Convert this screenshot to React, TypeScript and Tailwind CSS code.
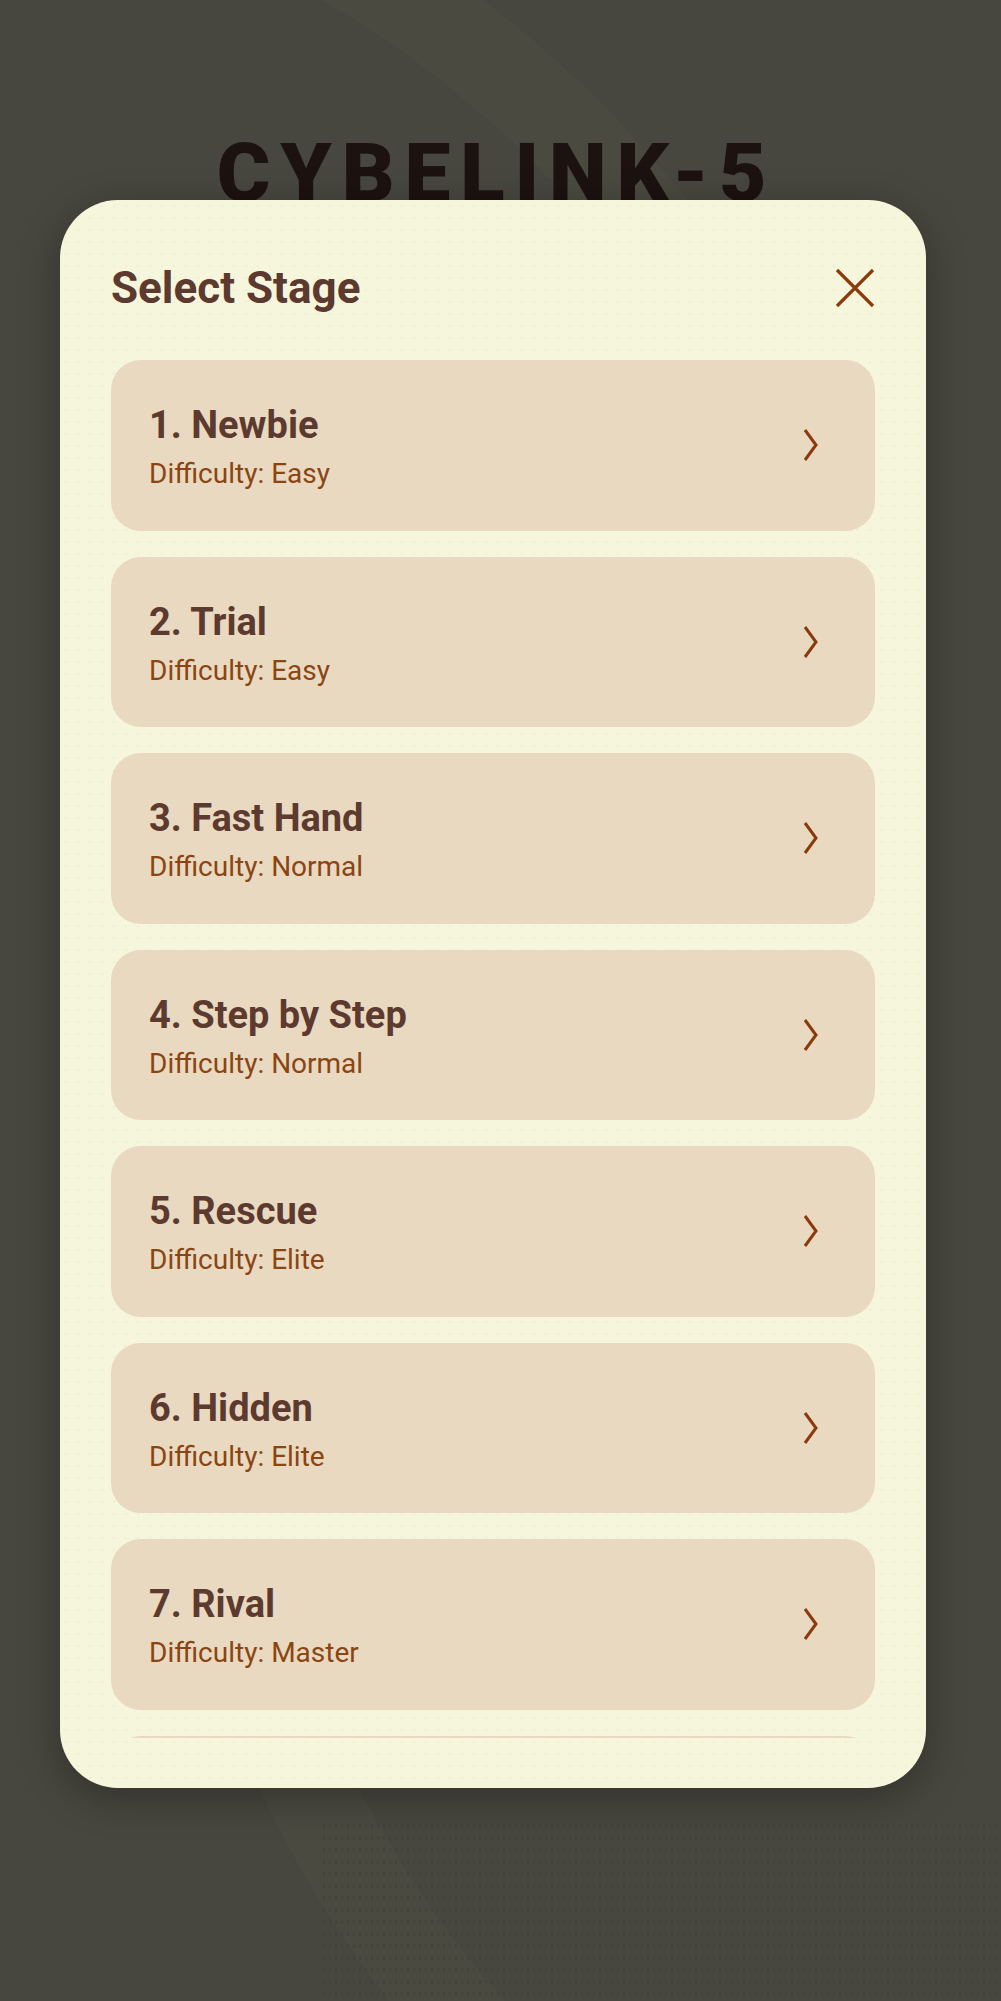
import React from "react";

type Stage = {
  name: string;
  difficulty: string;
};

const stages: Stage[] = [
  { name: "1. Newbie", difficulty: "Easy" },
  { name: "2. Trial", difficulty: "Easy" },
  { name: "3. Fast Hand", difficulty: "Normal" },
  { name: "4. Step by Step", difficulty: "Normal" },
  { name: "5. Rescue", difficulty: "Elite" },
  { name: "6. Hidden", difficulty: "Elite" },
  { name: "7. Rival", difficulty: "Master" },
];

const Chevron: React.FC = () => (
  <svg width="16" height="34" viewBox="0 0 16 34" fill="none">
    <path d="M3 2 L14 17 L3 32" stroke="#8b3a0e" strokeWidth="3" strokeLinejoin="miter" />
  </svg>
);

const CloseIcon: React.FC = () => (
  <svg width="42" height="42" viewBox="0 0 42 42" fill="none">
    <path d="M3 3 L39 39 M39 3 L3 39" stroke="#8b3a0e" strokeWidth="3.2" />
  </svg>
);

const StageCard: React.FC<{ stage: Stage }> = ({ stage }) => {
  return (
    <button className="flex h-[170.5px] w-full shrink-0 items-center justify-between rounded-[30px] bg-[#e9d9c0] pl-[38px] pr-[57px] text-left">
      <div className="flex flex-col pt-[4px]">
        <span className="text-[38px] font-bold leading-[44px] text-[#5d3a2f]">
          {stage.name}
        </span>
        <span className="mt-[10px] text-[28px] leading-[34px] text-[#8b4513]">
          Difficulty: {stage.difficulty}
        </span>
      </div>
      <Chevron />
    </button>
  );
};

export default function App() {
  return (
    <div
      className="relative min-h-[2001px] w-full overflow-hidden bg-[#47473f]"
      style={{ fontFamily: "Roboto, 'Noto Sans', sans-serif" }}
    >
      {/* faint background arcs */}
      <div className="pointer-events-none absolute left-0 top-0 h-[300px] w-full overflow-hidden">
        <div className="absolute left-[-1330px] top-[-230px] h-[2260px] w-[2260px] rounded-full border-[90px] border-[#4a4a41]" />
      </div>
      <div className="pointer-events-none absolute left-0 top-[1500px] h-[501px] w-full overflow-hidden">
        <div className="absolute left-[150px] top-[-1350px] h-[2300px] w-[2300px] rounded-full border-[90px] border-[#4a4a41]" />
      </div>
      <div className="pointer-events-none absolute right-[-220px] top-[1820px] h-[400px] w-[900px] bg-[radial-gradient(#404039_1px,transparent_1px)] bg-[length:6px_12px] opacity-60" />

      <div className="relative flex flex-col">
        <h1 className="mr-[8px] self-center pt-[132px] text-[82px] font-black leading-none tracking-[0.12em] text-[#1c1210]">
          CYBELINK-5
        </h1>

        <div className="relative z-10 -mt-[14px] ml-[60px] flex h-[1588px] w-[866px] flex-col rounded-[58px] bg-[#f6f6dc] bg-[radial-gradient(#efeed3_1px,transparent_1px)] bg-[length:12px_12px] px-[51px] pb-[50px] pt-[50px] shadow-[0_10px_40px_rgba(0,0,0,0.3)]">
          <div className="mb-[34px] flex h-[76px] items-center justify-between">
            <h2 className="text-[44px] font-bold leading-[54px] text-[#5d3a2f]">Select Stage</h2>
            <button className="-mr-[1px] flex items-center justify-center">
              <CloseIcon />
            </button>
          </div>

          <div className="flex flex-1 flex-col gap-[26px] overflow-hidden">
            {stages.map((s) => (
              <StageCard key={s.name} stage={s} />
            ))}
            <div className="h-[170.5px] w-full shrink-0 rounded-[30px] bg-[#e9d9c0]" />
          </div>
        </div>
      </div>
    </div>
  );
}
